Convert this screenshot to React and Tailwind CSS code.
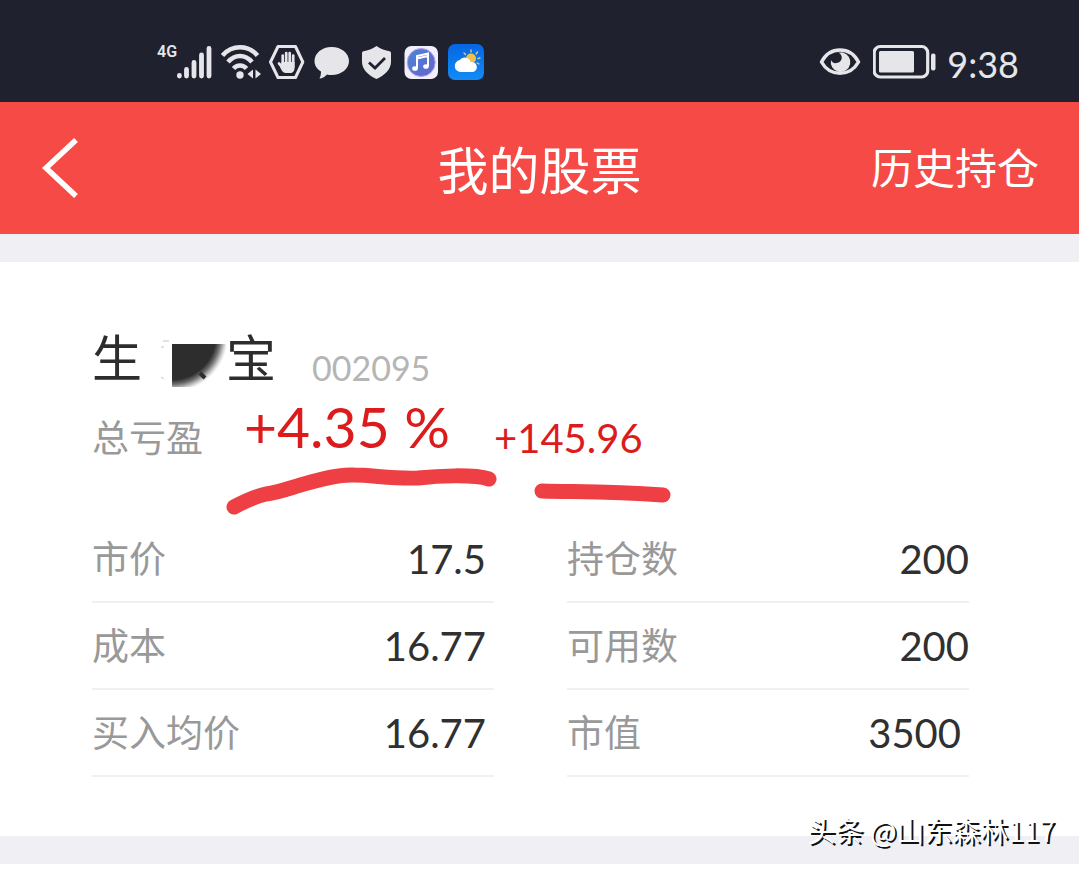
const positions = [
  [
    { label: "市价", value: "17.5", inset: true },
    { label: "成本", value: "16.77", inset: true },
    { label: "买入均价", value: "16.77", inset: true },
  ],
  [
    { label: "持仓数", value: "200" },
    { label: "可用数", value: "200" },
    { label: "市值", value: "3500", inset: true },
  ],
];

function SignalIcon() {
  return (
    <div className="flex h-9 w-14 items-start">
      <span className="w-5 font-['Roboto',sans-serif] text-base leading-4 font-semibold">4G</span>
      <svg className="h-9 w-9" viewBox="0 0 36 36" fill="none" stroke="currentColor" strokeWidth="4.800" strokeLinecap="round" aria-hidden="true">
        <path d="M2.400 31.500v.5M9.500 25.500V32M17 18.500V32M24.500 11v21M32 4.500V32" />
      </svg>
    </div>
  );
}

function WifiIcon() {
  return (
    <svg className="h-9 w-10" viewBox="0 0 40 36" fill="none" stroke="currentColor" strokeWidth="4.600" aria-hidden="true">
      <path d="M1.500 11.500C11 .5 27 .5 36.500 11.500M7 18C14 10 24 10 31 18M12.500 24.500C16 20.500 22 20.500 25.500 24.500" />
      <circle cx="19" cy="31" r="3.700" fill="currentColor" stroke="none" />
      <path d="M32 25.500v9l-5.500-4.500zM34.500 25.500v9l5.500-4.500z" fill="currentColor" stroke="none" />
    </svg>
  );
}

function HandIcon() {
  return (
    <svg className="h-9 w-9" viewBox="0 0 36 36" fill="none" stroke="currentColor" aria-hidden="true">
      <path d="M9 2.500h17.500L33.800 18l-7.300 15.500H9L1.500 18z" strokeWidth="3" strokeLinejoin="round" />
      <path d="M10 19.500l4 4M13.700 11.500v11M17.200 9V22M20.700 9V22M24.200 11.500V23" strokeWidth="2.700" strokeLinecap="round" />
      <path d="M9.500 20l3 1V18h13v6c0 3.500-2 5-4 5h-4.500c-2 0-3.500-1-4.500-3z" fill="currentColor" stroke="none" />
    </svg>
  );
}

function BubbleIcon() {
  return (
    <svg className="h-9 w-[37px]" viewBox="0 0 37 36" fill="currentColor" aria-hidden="true">
      <path d="M18.500 3C28.500 3 36 9.300 36 17S28.500 31 18.500 31c-1.500 0-3-.1-4.500-.5C11.500 33 9 34.500 6.500 34.500c1-2 1.500-4.500 1.500-7C4 25 1.500 21.500 1.500 17 1.500 9.300 9 3 18.500 3z" />
    </svg>
  );
}

function ShieldIcon() {
  return (
    <svg className="h-9 w-[37px]" viewBox="0 0 37 36" aria-hidden="true">
      <path d="M18.500 2c4 3 9 4.500 13 5.200 1 .3 1.500 1 1.500 2V18c0 7-6 13-14.500 17C10 31 4 25 4 18V9.200c0-1 .5-1.700 1.500-2C9.500 6.500 14.500 5 18.500 2z" fill="currentColor" />
      <path d="M11 18.500l6 5.500 10-10" fill="none" stroke="#20222e" strokeWidth="2.800" />
    </svg>
  );
}

function MusicIcon() {
  return (
    <svg className="h-9 w-[37px]" viewBox="0 0 37 36" aria-hidden="true">
      <defs>
        <linearGradient id="disc" x1="0" y1="0" x2="1" y2="1">
          <stop offset="0" stopColor="#4c86d8" />
          <stop offset="1" stopColor="#6562cc" />
        </linearGradient>
      </defs>
      <rect x="1.500" y="2" width="33.500" height="33" rx="7" fill="#f2effc" />
      <circle cx="18.200" cy="18.500" r="14" fill="url(#disc)" stroke="#bba5ec" />
      <path d="M14 24V12l11-2.500V22M14 14.500L25 12" fill="none" stroke="#fff" strokeWidth="2" />
      <ellipse cx="12" cy="24.500" rx="2.800" ry="2.300" fill="#fff" />
      <ellipse cx="23" cy="22.500" rx="2.800" ry="2.300" fill="#fff" />
    </svg>
  );
}

function WeatherIcon() {
  return (
    <svg className="h-9 w-9" viewBox="0 0 36 36" aria-hidden="true">
      <defs>
        <linearGradient id="sky" x1="0" y1="0" x2="0" y2="1">
          <stop offset="0" stopColor="#0566e2" />
          <stop offset="1" stopColor="#138bf6" />
        </linearGradient>
      </defs>
      <rect width="36" height="36" rx="7" fill="url(#sky)" />
      <path d="M23 6v2M16 9l1.500 1.500M29.500 8l-1.500 2M32 14l-2 .5M31 20l-2-1" stroke="#e7cf72" strokeWidth="1.300" strokeLinecap="round" />
      <circle cx="23" cy="14.500" r="5" fill="#f0c24c" />
      <path d="M12.500 28a6 6 0 0 1-.8-11.900 6.200 6.200 0 0 1 11 2.100A5 5 0 1 1 25 28z" fill="#fff" />
    </svg>
  );
}

function EyeIcon() {
  return (
    <svg className="h-9 w-11" viewBox="0 0 44 36" aria-hidden="true">
      <path d="M2.500 18C11 2 31 2 39.500 18 31 33 11 33 2.500 18z" fill="none" stroke="currentColor" strokeWidth="3.500" strokeLinejoin="round" />
      <path d="M23.500 8.500A9.800 9.800 0 1 1 12 16c1 2.500 3 3.500 5.500 3 4-.6 6-3.500 5-7-.5-1.500-1.500-2.700-3-3.200 1-.4 2.500-.5 4-.3z" fill="currentColor" />
    </svg>
  );
}

function BatteryIcon() {
  return (
    <svg className="h-9 w-16" viewBox="0 0 64 36" aria-hidden="true">
      <rect x="1.200" y="2.500" width="53.500" height="30.500" rx="6" fill="none" stroke="currentColor" strokeWidth="3.200" />
      <rect x="6" y="7" width="35" height="21.500" rx="1.500" fill="currentColor" />
      <rect x="58" y="9.500" width="4.500" height="17" rx="2" fill="currentColor" />
    </svg>
  );
}

function HiddenCharacter() {
  return (
    <svg className="mt-[10px] h-12 w-[84px]" viewBox="0 0 84 48" aria-hidden="true">
      <defs>
        <radialGradient id="smudge" gradientUnits="userSpaceOnUse" cx="30" cy="-4" r="56">
          <stop offset="0.78" stopColor="#2d2d2d" />
          <stop offset="0.86" stopColor="#2d2d2d" stopOpacity="0.7" />
          <stop offset="0.95" stopColor="#2d2d2d" stopOpacity="0.2" />
          <stop offset="1" stopColor="#2d2d2d" stopOpacity="0" />
        </radialGradient>
      </defs>
      <path d="M30 4h54v43H30z" fill="url(#smudge)" />
      <path d="M58 33l5 5" stroke="#2d2d2d" strokeWidth="4" />
      <path d="M21 1h6M19 7h3M19 37l3 2" stroke="#d8d8d8" strokeWidth="1.500" />
    </svg>
  );
}

function PositionList({ rows }) {
  return (
    <dl>
      {rows.map((row) => (
        <div key={row.label} className="flex h-[87px] items-center justify-between border-b-2 border-[#f0f0f0]">
          <dt className="pb-[2px] text-[37px] leading-none text-[#999]">{row.label}</dt>
          <dd className={`font-['Lato',sans-serif] text-[40px] leading-none text-[#303030] ${row.inset ? "pr-2" : ""}`}>{row.value}</dd>
        </div>
      ))}
    </dl>
  );
}

export default function App() {
  return (
    <div className="relative flex min-h-screen flex-col bg-white font-['Noto_Sans_CJK_SC',sans-serif]">
      <div className="flex h-[102px] items-center justify-between bg-[#1f222e] pt-[22px] pr-15 pl-[157px] text-[#e6e6ea]">
        <div className="flex items-center gap-2">
          <SignalIcon />
          <WifiIcon />
          <HandIcon />
          <BubbleIcon />
          <ShieldIcon />
          <MusicIcon />
          <WeatherIcon />
        </div>
        <div className="flex items-center gap-[10px]">
          <EyeIcon />
          <BatteryIcon />
          <time className="pt-1 font-['Lato',sans-serif] text-[36px] leading-9">9:38</time>
        </div>
      </div>

      <header className="grid h-[132px] grid-cols-[1fr_auto_1fr] items-center bg-[#f54a45] px-10 text-white">
        <button type="button" aria-label="返回" className="w-fit">
          <svg className="h-16 w-10" viewBox="0 0 40 64" fill="none" stroke="currentColor" strokeWidth="5.500" aria-hidden="true">
            <path d="M36 4L6 32l30 28" />
          </svg>
        </button>
        <h1 className="text-[51px] leading-none">我的股票</h1>
        <a href="#history" className="justify-self-end pb-1 text-[42px] leading-none">历史持仓</a>
      </header>

      <main className="border-y-28 border-[#efeff4] bg-white pt-[68px] pr-[110px] pb-[59px] pl-[92px]">
        <section className="relative">
          <div className="flex h-15 items-center">
            <h2 className="flex h-15 items-start text-[50px] leading-none text-[#2d2d2d]">
              生<HiddenCharacter />宝
            </h2>
            <span className="pt-4 pl-9 font-['Lato',sans-serif] text-[34px] leading-none text-[#b5b5b5]">002095</span>
          </div>
          <div className="flex h-[126px] items-start">
            <span className="w-[152px] pt-7 text-[37px] leading-none text-[#999]">总亏盈</span>
            <strong className="pt-2 font-['Lato',sans-serif] text-[57px] leading-none font-normal text-[#dc1c1c]">+4.35 %</strong>
            <span className="pt-7 pl-11 font-['Lato',sans-serif] text-[40px] leading-none text-[#dc1c1c]">+145.96</span>
          </div>
          <svg className="pointer-events-none absolute top-[130px] left-[128px] h-15 w-[460px]" viewBox="0 0 460 60" fill="none" stroke="#ee4044" strokeWidth="15" strokeLinecap="round" strokeLinejoin="round" aria-hidden="true">
            <path d="M14 47Q33 37 46 34C57 33 73 27 84 24C101 19 119 14 134 15C152 15 173 19 198 18C217 16 253 14 269 19" />
            <path d="M322 31C356 32 389 31 443 35" />
          </svg>
        </section>
        <section className="grid grid-cols-2 gap-[73px]">
          {positions.map((rows) => (
            <PositionList key={rows[0].label} rows={rows} />
          ))}
        </section>
      </main>

      <p className="absolute right-6 bottom-[26px] text-[28px] leading-7 text-white [text-shadow:2px_2px_0_#111]">头条 @山东森林117</p>
    </div>
  );
}
